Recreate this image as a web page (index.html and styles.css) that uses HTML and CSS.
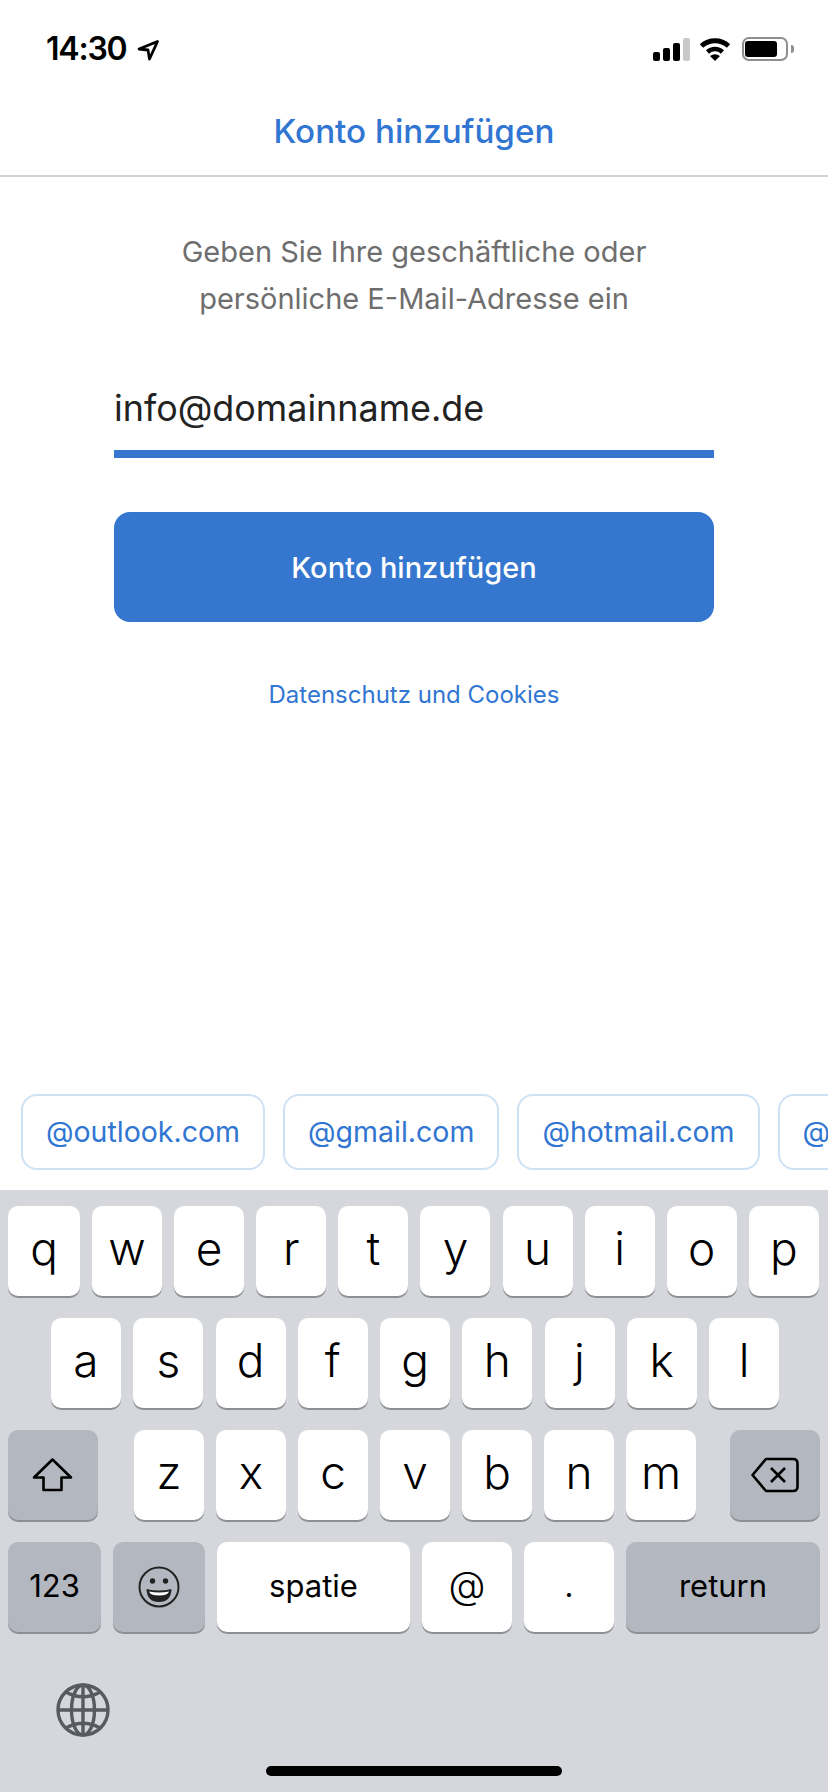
FILE: index.html
```html
<!DOCTYPE html>
<html lang="de">
<head>
    <meta charset="UTF-8">
    <meta name="viewport" content="width=device-width, initial-scale=1.0">
    <title>Konto hinzufügen</title>
    <link rel="stylesheet" href="styles.css">
</head>
<body>
    <div class="status-bar">
        <div class="status-left">
            <span class="time">14:30</span>
            <svg class="location-icon" width="24" height="24" viewBox="0 0 24 24"><path d="M21.500 3.500 L3 11 L12 12 L13.500 21 Z" fill="none" stroke="#000" stroke-width="2.800" stroke-linejoin="round"/></svg>
        </div>
        <div class="status-right">
            <div class="signal">
                <span class="bar bar-1"></span>
                <span class="bar bar-2"></span>
                <span class="bar bar-3"></span>
                <span class="bar bar-4"></span>
            </div>
            <svg class="wifi-icon" width="32" height="24" viewBox="0 0 32 24" fill="none" stroke="#000">
                <path d="M2.500 9 A20 20 0 0 1 29.500 9" stroke-width="5"/>
                <path d="M8.500 15 A11 11 0 0 1 23.500 15" stroke-width="4.500"/>
                <path d="M11 19 Q16 15.500 21 19 L16 24 Z" fill="#000" stroke="none"/>
            </svg>
            <div class="battery"><span class="battery-level"></span></div>
            <span class="battery-nub"></span>
        </div>
    </div>

    <div class="nav-bar">Konto hinzufügen</div>

    <div class="content">
        <p class="intro">Geben Sie Ihre geschäftliche oder<br>persönliche E-Mail-Adresse ein</p>
        <div class="email-field">info@domainname.de</div>
        <button class="add-button" type="button">Konto hinzufügen</button>
        <a class="privacy-link" href="#">Datenschutz und Cookies</a>
    </div>

    <div class="domain-chips">
        <span class="chip">@outlook.com</span>
        <span class="chip">@gmail.com</span>
        <span class="chip">@hotmail.com</span>
        <span class="chip chip-more">@</span>
    </div>

    <div class="keyboard">
        <div class="key-row key-row-top">
            <span class="key key-q">q</span><span class="key">w</span><span class="key">e</span><span class="key">r</span><span class="key">t</span>
            <span class="key">y</span><span class="key">u</span><span class="key">i</span><span class="key">o</span><span class="key">p</span>
        </div>
        <div class="key-row key-row-middle">
            <span class="key">a</span><span class="key">s</span><span class="key">d</span><span class="key">f</span><span class="key">g</span>
            <span class="key">h</span><span class="key">j</span><span class="key">k</span><span class="key">l</span>
        </div>
        <div class="key-row">
            <span class="key key-dark key-shift">
                <svg width="42" height="36" viewBox="0 0 42 36"><path d="M20.500 2.500 L2 20.500 H11.500 V33 H29.500 V20.500 H39 Z" fill="none" stroke="#000" stroke-width="2.600" stroke-linejoin="round"/></svg>
            </span>
            <span class="key">z</span><span class="key">x</span><span class="key">c</span><span class="key">v</span>
            <span class="key">b</span><span class="key">n</span><span class="key">m</span>
            <span class="key key-dark key-delete">
                <svg width="48" height="36" viewBox="0 0 48 36"><path d="M15 2 H42 Q46.500 2 46.500 6.500 V29.500 Q46.500 34 42 34 H15 L1.500 18 Z" fill="none" stroke="#000" stroke-width="2.600" stroke-linejoin="round"/><path d="M20 11 L34 25 M34 11 L20 25" stroke="#000" stroke-width="2.600"/></svg>
            </span>
        </div>
        <div class="key-row">
            <span class="key key-dark key-label key-123">123</span>
            <span class="key key-dark key-emoji">
                <svg width="42" height="42" viewBox="0 0 42 42">
                    <circle cx="21" cy="21" r="19.500" fill="none" stroke="#222" stroke-width="2"/>
                    <circle cx="14.500" cy="15" r="2.700" fill="#222"/>
                    <circle cx="27.500" cy="15" r="2.700" fill="#222"/>
                    <path d="M8.500 23 Q21 26 33.500 23 Q33 36 21 36 Q9 36 8.500 23 Z" fill="#222"/>
                    <path d="M11 25.500 Q21 27.500 31 25.500 Q30 29.500 21 29.500 Q12 29.500 11 25.500 Z" fill="#fff"/>
                </svg>
            </span>
            <span class="key key-label key-space">spatie</span>
            <span class="key key-label key-at">@</span>
            <span class="key key-label key-dot">.</span>
            <span class="key key-dark key-label key-return">return</span>
        </div>
        <div class="keyboard-footer">
            <svg class="globe-icon" width="54" height="54" viewBox="0 0 54 54" fill="none" stroke="#565a61" stroke-width="3.400">
                <circle cx="27" cy="27" r="25"/>
                <ellipse cx="27" cy="27" rx="11.500" ry="25"/>
                <path d="M27 2 V52 M2 27 H52 M9.300 8.700 Q27 18.700 44.700 8.700 M9.300 45.300 Q27 35.300 44.700 45.300"/>
            </svg>
        </div>
        <div class="home-indicator"></div>
    </div>
</body>
</html>
```

FILE: styles.css
```css
* {
    box-sizing: border-box;
}
body {
    font-family: Inter, "Noto Sans", sans-serif;
    width: 828px;
    height: 1792px;
    margin: 0;
    display: flex;
    flex-direction: column;
    overflow: hidden;
    background-color: #fff;
}

/* status bar */
.status-bar {
    height: 88px;
    padding: 30px 34px 0 46px;
    display: flex;
    justify-content: space-between;
    align-items: flex-start;
}
.status-left {
    display: flex;
    align-items: center;
    gap: 9px;
}
.time {
    font-size: 32px;
    font-weight: 600;
    line-height: 38px;
    letter-spacing: -1.2px;
    color: #000;
}
.location-icon {
    margin-top: 1px;
}
.status-right {
    display: flex;
    align-items: center;
    margin-top: 7px;
}
.signal {
    display: flex;
    align-items: flex-end;
    gap: 3px;
    height: 24px;
    margin-right: 9px;
}
.bar {
    width: 7px;
    border-radius: 2px;
    background-color: #000;
}
.bar-1 { height: 9px; }
.bar-2 { height: 13px; }
.bar-3 { height: 18px; }
.bar-4 { height: 23px; background-color: #c9c9c9; }
.wifi-icon {
    margin-right: 11px;
}
.battery {
    width: 46px;
    height: 24px;
    padding: 2px 2px 2px 1px;
    border: 2px solid #8e8e8e;
    border-radius: 7px;
}
.battery-level {
    display: block;
    width: 32px;
    height: 100%;
    border-radius: 3px;
    background-color: #000;
}
.battery-nub {
    width: 3px;
    height: 8px;
    margin-left: 3px;
    border-radius: 0 3px 3px 0;
    background-color: #8e8e8e;
}

/* title */
.nav-bar {
    height: 89px;
    border-bottom: 2px solid #d4d4d4;
    font-size: 33.2px;
    font-weight: 550;
    text-align: center;
    line-height: 86px;
    color: #3176d2;
}

/* form */
.content {
    flex: 1;
    padding: 0 114px;
    display: flex;
    flex-direction: column;
    align-items: center;
}
.intro {
    margin: 51px 0 0;
    font-size: 29px;
    line-height: 47px;
    text-align: center;
    color: #6e6e6e;
}
.email-field {
    width: 100%;
    height: 110px;
    margin-top: 26px;
    padding-top: 36px;
    border-bottom: 8px solid #3576cf;
    font-size: 35.9px;
    line-height: 48px;
    color: #222;
}
.add-button {
    width: 100%;
    height: 110px;
    margin-top: 54px;
    border: none;
    border-radius: 16px;
    background-color: #3576cf;
    color: #fff;
    font-family: inherit;
    font-size: 29px;
    font-weight: 500;
}
.privacy-link {
    margin-top: 58px;
    font-size: 24px;
    line-height: 30px;
    color: #3176d2;
    text-decoration: none;
}

/* domain suggestions */
.domain-chips {
    height: 96px;
    padding-left: 21px;
    display: flex;
    gap: 18px;
    overflow: hidden;
}
.chip {
    flex: none;
    height: 76px;
    padding: 0 23px;
    border: 2px solid #cfe2f5;
    border-radius: 16px;
    font-size: 28.5px;
    line-height: 72px;
    color: #3176d2;
}
.chip-more {
    width: 120px;
}

/* keyboard */
.keyboard {
    height: 602px;
    padding-top: 16px;
    background-color: #d5d7dc;
    display: flex;
    flex-direction: column;
}
.key-row {
    height: 90px;
    margin-bottom: 22px;
    padding: 0 8px;
    display: flex;
    gap: 12px;
}
.key-row-top {
    gap: 12.1px;
}
.key-row-middle {
    padding: 0 51px;
    gap: 12.25px;
}
.key {
    flex: none;
    width: 70px;
    height: 90px;
    padding-bottom: 6px;
    border-radius: 10px;
    background-color: #fff;
    box-shadow: 0 2px 0 #8f9095;
    display: flex;
    justify-content: center;
    align-items: center;
    font-size: 46px;
    font-weight: 300;
    color: #000;
}
.key-q {
    width: 72px;
}
.key-dark {
    background-color: #b3b7bf;
}
.key-shift,
.key-delete {
    width: 90px;
    padding-bottom: 0;
}
.key-shift {
    margin-right: 24px;
}
.key-delete {
    margin-left: 22px;
}
.key-label {
    padding-bottom: 4px;
    font-size: 31px;
    font-weight: 400;
}
.key-123 {
    width: 93px;
}
.key-emoji {
    width: 92px;
    padding-bottom: 0;
}
.key-space {
    width: 193px;
}
.key-at,
.key-dot {
    width: 90px;
}
.key-at {
    font-size: 38px;
    font-weight: 300;
}
.key-return {
    width: 194px;
}
.keyboard-footer {
    padding: 29px 0 0 56px;
}
.globe-icon {
    display: block;
}
.home-indicator {
    width: 296px;
    height: 10px;
    margin: 29px auto 0;
    border-radius: 5px;
    background-color: #000;
}
```
